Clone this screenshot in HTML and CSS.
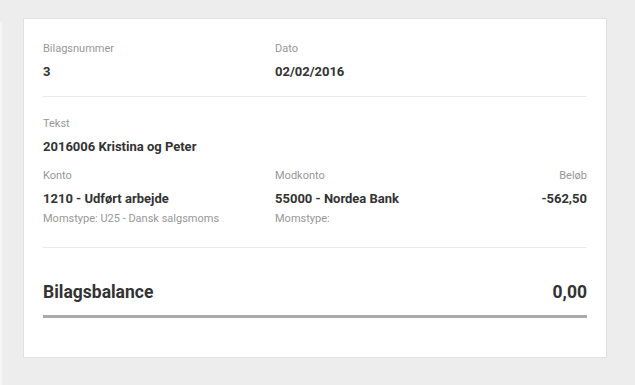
FILE: index.html
```html
<!DOCTYPE html>
<html lang="da">
<head>
    <meta charset="UTF-8">
    <meta name="viewport" content="width=device-width, initial-scale=1.0">
    <title>Bilag 3</title>
    <link rel="stylesheet" href="styles.css">
</head>
<body>
    <div class="page">
        <div class="sidebar-edge"></div>

        <main class="main">
            <div class="voucher-card">
                <div class="field-row two-cols">
                    <div class="field">
                        <div class="field-label">Bilagsnummer</div>
                        <div class="field-value">3</div>
                    </div>
                    <div class="field">
                        <div class="field-label">Dato</div>
                        <div class="field-value">02/02/2016</div>
                    </div>
                </div>

                <div class="divider"></div>

                <div class="field">
                    <div class="field-label">Tekst</div>
                    <div class="field-value">2016006 Kristina og Peter</div>
                </div>

                <div class="field-row three-cols">
                    <div class="field">
                        <div class="field-label">Konto</div>
                        <div class="field-value">1210 - Udført arbejde</div>
                        <div class="field-sub">Momstype: U25 - Dansk salgsmoms</div>
                    </div>
                    <div class="field">
                        <div class="field-label">Modkonto</div>
                        <div class="field-value">55000 - Nordea Bank</div>
                        <div class="field-sub">Momstype:</div>
                    </div>
                    <div class="field amount">
                        <div class="field-label">Beløb</div>
                        <div class="field-value">-562,50</div>
                    </div>
                </div>

                <div class="divider lower"></div>

                <div class="balance">
                    <span>Bilagsbalance</span>
                    <span>0,00</span>
                </div>
            </div>
        </main>
    </div>
</body>
</html>
```

FILE: styles.css
```css
* {
    margin: 0;
    padding: 0;
    box-sizing: border-box;
}

body {
    font-family: Roboto, 'Liberation Sans', Arial, sans-serif;
    background: #ededed;
    color: #333;
    height: 385px;
    overflow: hidden;
}

.page {
    display: flex;
    height: 100%;
}

.sidebar-edge {
    width: 2px;
    margin-top: 22px;
    background: #f5f5f5;
}

.main {
    flex: 1;
    padding: 18px 28px 0 21px;
}

.voucher-card {
    background: #fff;
    border: 1px solid #e1e1e1;
    padding: 22px 19px 39px 19px;
}

.field-row {
    display: grid;
}

.two-cols {
    grid-template-columns: 232px 1fr;
}

.three-cols {
    grid-template-columns: 232px 1fr auto;
    margin-top: 12px;
}

.field-label {
    font-size: 11px;
    line-height: 16px;
    color: #979797;
    margin-bottom: 6px;
}

.field-value {
    font-size: 13px;
    line-height: 18px;
    font-weight: 700;
    color: #333;
}

.field-sub {
    font-size: 11px;
    line-height: 16px;
    color: #979797;
    margin-top: 3px;
}

.amount {
    text-align: right;
}

.divider {
    height: 1px;
    background: #e8e8e8;
    margin: 15px 0 19px;
}

.divider.lower {
    margin: 20px 0 32px;
}

.balance {
    display: flex;
    justify-content: space-between;
    font-size: 17.5px;
    line-height: 24px;
    font-weight: 700;
    color: #333;
    padding-bottom: 11px;
    border-bottom: 3px solid #aaa;
}
```
